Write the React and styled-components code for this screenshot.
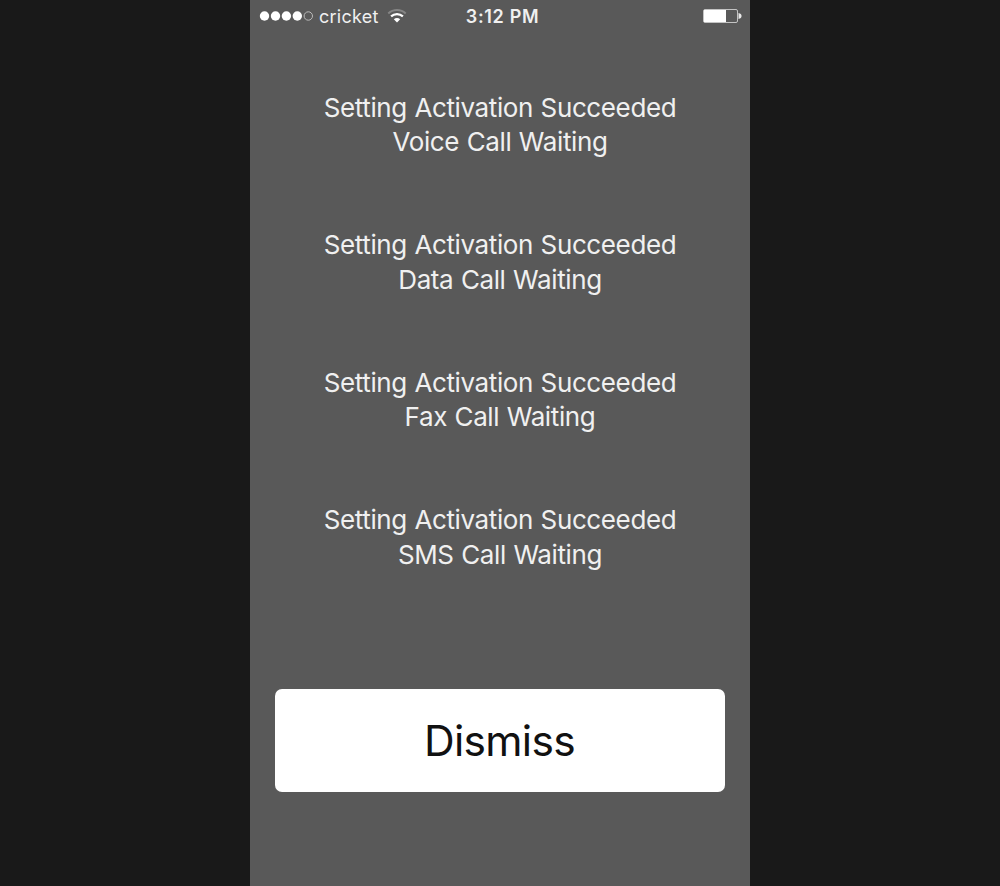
import React from "react";
import styled, { createGlobalStyle } from "styled-components";

const GlobalStyle = createGlobalStyle`
  * {
    box-sizing: border-box;
  }

  body {
    margin: 0;
    background: #191919;
    font-family: Inter, "Liberation Sans", sans-serif;
  }
`;

const Page = styled.div`
  display: flex;
  justify-content: center;
  height: 886px;
  overflow: hidden;
`;

const Phone = styled.main`
  display: flex;
  flex-direction: column;
  width: 500px;
  height: 100%;
  background: #595959;
  color: #f0f0f0;
`;

const StatusBar = styled.header`
  display: grid;
  grid-template-columns: 1fr auto 1fr;
  align-items: center;
  height: 32px;
  padding: 0 8px 0 9px;
`;

const Carrier = styled.div`
  display: flex;
  align-items: center;
`;

const CarrierName = styled.span`
  margin: 0 8px 0 5px;
  padding-top: 1px;
  font-size: 18px;
  line-height: 22px;
  letter-spacing: 0.25px;
`;

const Clock = styled.span`
  padding: 1px 0 0 4px;
  font-size: 18px;
  font-weight: 600;
  line-height: 22px;
  letter-spacing: 0.65px;
`;

const BatteryIcon = styled.svg`
  justify-self: end;
`;

const Messages = styled.section`
  display: flex;
  flex-direction: column;
  gap: 68.8px;
  padding-top: 58.5px;
`;

const Message = styled.p`
  margin: 0;
  font-size: 26px;
  line-height: 34.4px;
  letter-spacing: -0.38px;
  word-spacing: 0.6px;
  text-align: center;
`;

const DismissButton = styled.button`
  width: 450px;
  height: 103px;
  margin: 117px auto 0;
  padding: 0 1px 0 0;
  border: 0;
  border-radius: 7px;
  background: #fff;
  color: #111;
  font-family: inherit;
  font-size: 42.5px;
  letter-spacing: -0.7px;
`;

const services = ["Voice", "Data", "Fax", "SMS"];

function Signal() {
  return (
    <svg width="55" height="12" viewBox="0 0 55 12">
      {[5.5, 16.5, 27.4, 38.3].map((x) => (
        <circle key={x} cx={x} cy="6" r="4.7" fill="#fff" />
      ))}
      <circle cx="49.3" cy="6" r="4.2" fill="none" stroke="#bbb" />
    </svg>
  );
}

function Wifi() {
  return (
    <svg width="20" height="16" viewBox="0 0 20 16" fill="none">
      <path d="M1.3 5.4C6.2.8 13.8.8 18.7 5.4" stroke="#858585" strokeWidth="2" />
      <path d="M4.1 8.4C7.4 5.3 12.6 5.3 15.9 8.4" stroke="#fff" strokeWidth="2.2" />
      <path d="M6.8 11.3C8.6 9.6 11.4 9.6 13.2 11.3L10 14.6Z" fill="#fff" />
    </svg>
  );
}

function Battery() {
  return (
    <BatteryIcon width="40" height="16" viewBox="0 0 40 16">
      <rect x="1.5" y="1.5" width="34" height="13" rx="1.5" fill="none" stroke="#c4c4c4" />
      <rect x="2" y="2" width="22" height="12" fill="#fff" />
      <path d="M36.5 5C40.6 5.5 40.6 10.5 36.5 11Z" fill="#e8e8e8" />
    </BatteryIcon>
  );
}

function App() {
  return (
    <Page>
      <GlobalStyle />
      <Phone>
        <StatusBar>
          <Carrier>
            <Signal />
            <CarrierName>cricket</CarrierName>
            <Wifi />
          </Carrier>
          <Clock>3:12 PM</Clock>
          <Battery />
        </StatusBar>
        <Messages>
          {services.map((service) => (
            <Message key={service}>
              Setting Activation Succeeded
              <br />
              {service} Call Waiting
            </Message>
          ))}
        </Messages>
        <DismissButton>Dismiss</DismissButton>
      </Phone>
    </Page>
  );
}

export default App;
